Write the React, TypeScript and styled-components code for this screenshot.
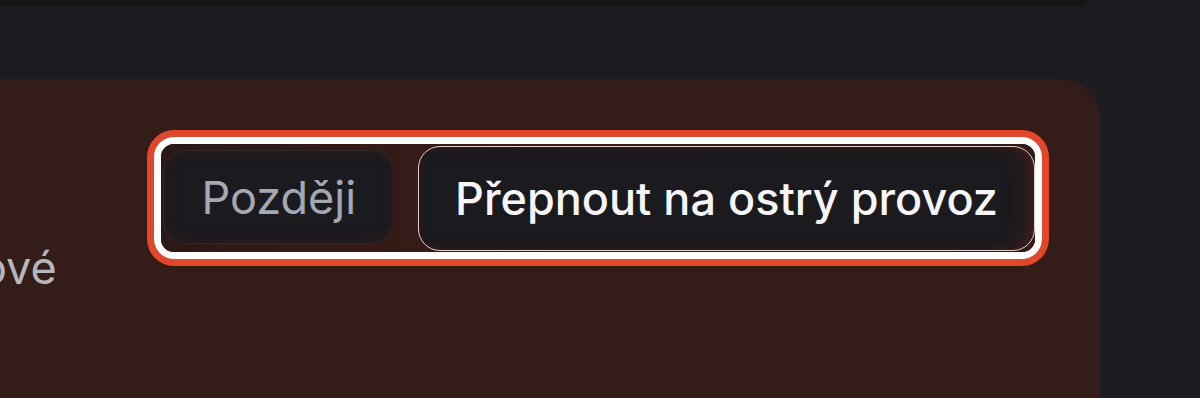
import { createGlobalStyle, styled } from 'styled-components';
import { FunctionComponent } from 'react';

const GlobalStyle = createGlobalStyle`
  html, body {
    margin: 0;
    padding: 0;
    background: #1d1c21;
    font-family: Inter, "Noto Sans", sans-serif;
    overflow: hidden;
  }
`;

const Page = styled.div`
  width: 1200px;
  height: 398px;
  overflow: hidden;
`;

const TopBar = styled.div`
  width: 1087px;
  height: 7px;
  background: #151517;
  border-bottom-right-radius: 16px;
`;

const Panel = styled.section`
  margin-top: 72px;
  width: 1100px;
  height: 360px;
  box-sizing: border-box;
  padding: 58px 58px 0 0;
  background: #341c18;
  border-top-right-radius: 40px;
  display: flex;
  justify-content: space-between;
  align-items: flex-start;
  overflow: hidden;
`;

/* the paragraph continues past the left edge of the viewport */
const Message = styled.p`
  margin: 0 0 0 -20px;
  padding-top: 104px;
  font-size: 45px;
  line-height: 1.2;
  color: #b7b6bd;
`;

const FocusRing = styled.div`
  border: 7px solid #ffffff;
  border-radius: 20px;
  box-shadow: 0 0 0 7px #e2472c;
  overflow: hidden;
`;

const Actions = styled.div`
  height: 108px;
  display: flex;
  align-items: center;
  gap: 24px;
  padding-left: 2px;
  background: linear-gradient(90deg, #2b1917, #3a1c18 40%, #2f1a18);
`;

const Button = styled.button<{ $primary?: boolean }>`
  box-sizing: border-box;
  height: ${(p) => (p.$primary ? '105px' : '94px')};
  padding: 0 ${(p) => (p.$primary ? '36px' : '37px')};
  margin-bottom: ${(p) => (p.$primary ? '0' : '2px')};
  border-radius: 22px;
  border: ${(p) => (p.$primary ? '1.5px solid #e6d0c9' : '1px solid rgba(255, 255, 255, 0.07)')};
  background: #1b1a1f;
  box-shadow: ${(p) =>
    p.$primary
      ? 'inset -14px 0 22px -10px rgba(90, 35, 30, 0.7), inset 0 0 10px rgba(60, 25, 22, 0.5)'
      : 'inset 0 0 12px rgba(70, 30, 28, 0.5)'};
  font-family: Inter, "Noto Sans", sans-serif;
  font-size: 45px;
  font-weight: ${(p) => (p.$primary ? 500 : 400)};
  color: ${(p) => (p.$primary ? '#f6f6f8' : '#a3a8b5')};
  white-space: nowrap;
  cursor: pointer;
`;

const App: FunctionComponent = () => {
  return (
    <Page>
      <GlobalStyle />
      <TopBar />
      <Panel>
        <Message>ové</Message>
        <FocusRing>
          <Actions>
            <Button>Později</Button>
            <Button $primary>Přepnout na ostrý provoz</Button>
          </Actions>
        </FocusRing>
      </Panel>
    </Page>
  );
};

export default App;
